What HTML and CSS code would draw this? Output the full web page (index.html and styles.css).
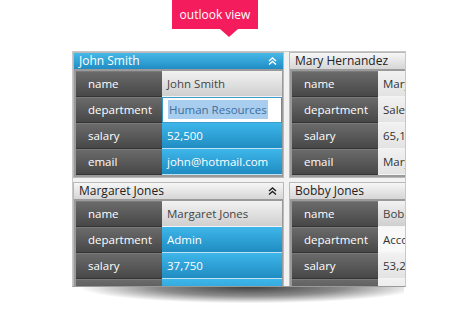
FILE: index.html
```html
<!DOCTYPE html>
<html>
<head>
<meta charset="utf-8">
<link rel="stylesheet" href="styles.css">
</head>
<body>
<div class="tip">outlook view</div>
<div class="stage">
  <div class="frame">
    <div class="grid">
      <div class="card">
        <div class="head head-blue"><span>John Smith</span>
          <svg class="chev" width="9" height="8" viewBox="0 0 9 8"><path d="M1 4 L4.5 1 L8 4 M1 7.5 L4.5 4.5 L8 7.5" fill="none" stroke="#fff" stroke-width="1.4"/></svg>
        </div>
        <div class="body">
          <div class="row"><div class="lbl">name</div><div class="val v-gray">John Smith</div></div>
          <div class="row"><div class="lbl">department</div><div class="val v-edit"><span class="sel">Human Resources</span></div></div>
          <div class="row"><div class="lbl">salary</div><div class="val v-blue">52,500</div></div>
          <div class="row"><div class="lbl">email</div><div class="val v-blue">john@hotmail.com</div></div>
        </div>
      </div>
      <div class="card">
        <div class="head head-gray"><span>Mary Hernandez</span></div>
        <div class="body">
          <div class="row"><div class="lbl">name</div><div class="val v-light">Mary Hernandez</div></div>
          <div class="row"><div class="lbl">department</div><div class="val v-light">Sales</div></div>
          <div class="row"><div class="lbl">salary</div><div class="val v-light">65,100</div></div>
          <div class="row"><div class="lbl">email</div><div class="val v-light">Mary@hotmail.com</div></div>
        </div>
      </div>
      <div class="card">
        <div class="head head-gray"><span>Margaret Jones</span>
          <svg class="chev" width="9" height="8" viewBox="0 0 9 8"><path d="M1 4 L4.5 1 L8 4 M1 7.5 L4.5 4.5 L8 7.5" fill="none" stroke="#222" stroke-width="1.4"/></svg>
        </div>
        <div class="body">
          <div class="row"><div class="lbl">name</div><div class="val v-gray">Margaret Jones</div></div>
          <div class="row"><div class="lbl">department</div><div class="val v-blue">Admin</div></div>
          <div class="row"><div class="lbl">salary</div><div class="val v-blue">37,750</div></div>
          <div class="row"><div class="lbl">email</div><div class="val v-blue">margaret@hotmail.com</div></div>
        </div>
      </div>
      <div class="card">
        <div class="head head-gray"><span>Bobby Jones</span></div>
        <div class="body">
          <div class="row"><div class="lbl">name</div><div class="val v-gray">Bobby Jones</div></div>
          <div class="row"><div class="lbl">department</div><div class="val v-white">Accounting</div></div>
          <div class="row"><div class="lbl">salary</div><div class="val v-light">53,250</div></div>
          <div class="row"><div class="lbl">email</div><div class="val v-light">bobby@hotmail.com</div></div>
        </div>
      </div>
    </div>
  </div>
  <div class="shadow"></div>
</div>
</body>
</html>
```

FILE: styles.css
```css
html, body {
  margin: 0;
  padding: 0;
  background: #fff;
  font-family: "Open Sans", "Noto Sans", sans-serif;
  font-size: 11.5px;
}
body {
  min-height: 310px;
}

.tip {
  position: absolute;
  left: 172px;
  top: 0;
  width: 86px;
  height: 29px;
  background: #f41c5c;
  color: #fff;
  font-size: 12px;
  line-height: 29px;
  text-align: center;
}
.tip::after {
  content: "";
  position: absolute;
  left: 48px;
  top: 29px;
  border-left: 9px solid transparent;
  border-right: 9px solid transparent;
  border-top: 8px solid #f41c5c;
}

.stage {
  margin: 51px 0 0 72px;
  width: 334px;
}
.shadow {
  margin: 0 2px 0 10px;
  height: 16px;
  background: radial-gradient(ellipse at 52% 0%, rgba(0, 0, 0, 0.75) 0%, rgba(0, 0, 0, 0.45) 40%, rgba(0, 0, 0, 0) 72%);
}

.frame {
  box-sizing: border-box;
  width: 334px;
  height: 236px;
  border: 1px solid #c8c8c8;
  border-bottom-color: #9a9a9a;
  background: #f2f2f2;
  overflow: hidden;
}

.grid {
  display: grid;
  grid-template-columns: 211px 211px;
  column-gap: 5px;
  row-gap: 4px;
}

.card {
  border: 1px solid #b9b9b9;
  background: #9a9a9a;
}

.head {
  height: 16px;
  display: flex;
  align-items: center;
  justify-content: space-between;
  padding: 0 6px 0 5px;
  font-size: 12px;
  line-height: 16px;
}
.head-blue {
  background: linear-gradient(#47b8e8, #1f8dc3);
  color: #fff;
}
.head-gray {
  background: linear-gradient(#f6f6f6, #d6d6d6);
  color: #222;
}
.chev {
  display: block;
}

.body {
  padding: 2px 1px 2px 2px;
  display: flex;
  flex-direction: column;
}

.row {
  display: grid;
  grid-template-columns: 86px 1fr;
  height: 26px;
}

.lbl {
  box-sizing: border-box;
  padding-left: 12px;
  line-height: 25px;
  color: #fff;
  background: linear-gradient(#6c6c6c, #474747);
  border-bottom: 1px solid #343434;
  box-shadow: inset 0 1px 0 #7a7a7a;
}

.val {
  box-sizing: border-box;
  padding-left: 5px;
  line-height: 25px;
  white-space: nowrap;
  overflow: hidden;
  border-bottom: 1px solid #f4f4f4;
}
.v-gray {
  background: linear-gradient(#f2f2f2, #cfcfcf);
  color: #444;
}
.v-light {
  background: linear-gradient(#f1f1f1, #e3e3e3);
  color: #333;
}
.v-white {
  background: #f8f8f8;
  color: #333;
}
.v-blue {
  background: linear-gradient(#3eb6e9, #1f8cc2);
  color: #fff;
  border-bottom-color: #bfe2f2;
}
.v-edit {
  background: #fff;
  border: 1px solid #3a9bc8;
  line-height: 23px;
  padding-left: 5px;
  color: #3d6f9c;
}
.sel {
  background: #a9cdee;
  padding: 2px 1px;
}
```
